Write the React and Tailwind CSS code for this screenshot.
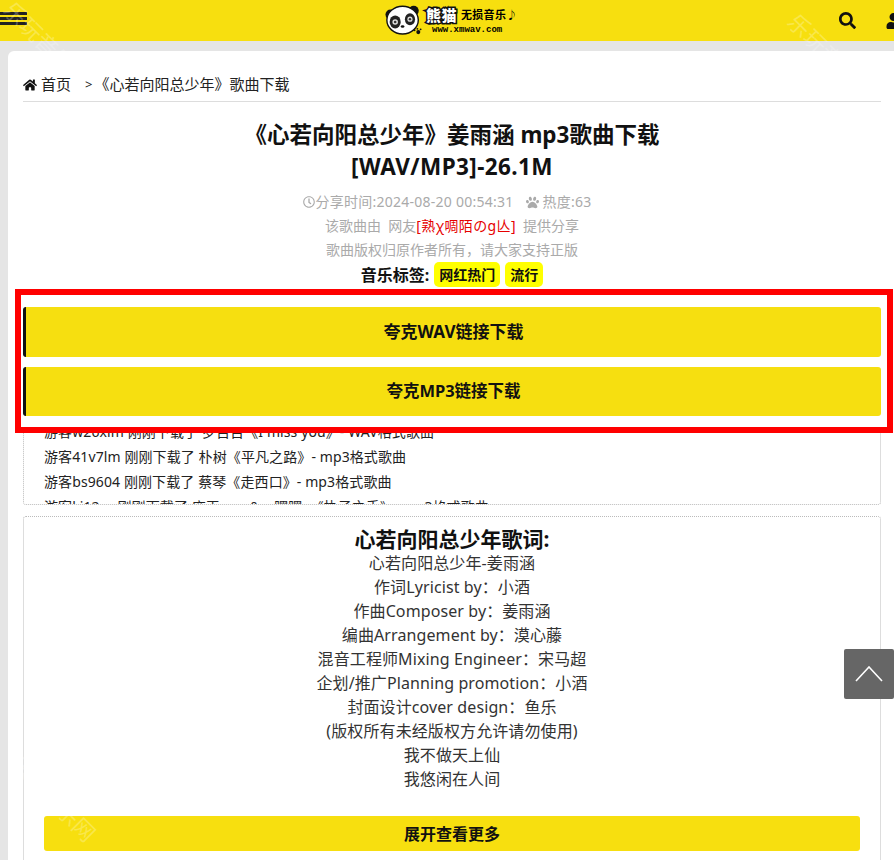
import React from 'react';
import { FaHome, FaPaw, FaRegClock, FaSearch, FaUser } from 'react-icons/fa';

const lyrics = [
  '心若向阳总少年-姜雨涵',
  '作词Lyricist by：小酒',
  '作曲Composer by：姜雨涵',
  '编曲Arrangement by：漠心藤',
  '混音工程师Mixing Engineer：宋马超',
  '企划/推广Planning promotion：小酒',
  '封面设计cover design：鱼乐',
  '(版权所有未经版权方允许请勿使用)',
  '我不做天上仙',
  '我悠闲在人间',
];

const downloads = [
  '游客41v7lm 刚刚下载了 朴树《平凡之路》- mp3格式歌曲',
  '游客bs9604 刚刚下载了 蔡琴《走西口》- mp3格式歌曲',
];

function PandaLogo() {
  return (
    <svg width="37" height="34" viewBox="0 0 40 36" className="shrink-0">
      <circle cx="6" cy="11" r="5.5" fill="#111" />
      <circle cx="31" cy="7" r="5.5" fill="#111" />
      <ellipse cx="19" cy="17" rx="17" ry="15" fill="#fff" stroke="#111" strokeWidth="1.5" />
      <ellipse cx="11" cy="19" rx="6" ry="7" fill="#222" />
      <ellipse cx="27" cy="16" rx="5.5" ry="6.5" fill="#222" />
      <circle cx="11" cy="19" r="3" fill="#ddd" />
      <circle cx="27" cy="16" r="2.8" fill="#ddd" />
      <circle cx="11" cy="19" r="1.4" fill="#333" />
      <circle cx="27" cy="16" r="1.3" fill="#333" />
      <ellipse cx="19" cy="24" rx="2" ry="1.3" fill="#111" />
      <circle cx="36" cy="30" r="2.2" fill="#111" />
      <circle cx="32" cy="28" r="1" fill="#111" />
      <circle cx="35" cy="26.5" r="1" fill="#111" />
      <circle cx="38.5" cy="27" r="1" fill="#111" />
    </svg>
  );
}

function Logo() {
  return (
    <div className="flex items-center text-black">
      <PandaLogo />
      <div className="flex flex-col ml-[4px] -mt-[2px]">
        <div className="flex items-center h-[20px] leading-[20px] whitespace-nowrap">
          <span className="text-[15px] font-black tracking-[0.5px] text-white [-webkit-text-stroke:3px_#111] [paint-order:stroke_fill]">熊猫</span>
          <span className="text-[11px] font-bold ml-[4px] tracking-[0.3px]">无损音乐</span>
          <span className="text-[11px] leading-none">♪</span>
        </div>
        <div className="text-[9px] leading-[10px] font-bold ml-[6px] whitespace-nowrap [font-family:'Liberation_Mono',monospace]">www.xmwav.com</div>
      </div>
    </div>
  );
}

function Watermark({ className }) {
  return (
    <span className={`absolute z-20 pointer-events-none whitespace-nowrap rotate-45 text-[22px] text-white/25 ${className}`}>
      乐玩音乐网
    </span>
  );
}

export default function App() {
  return (
    <div className="relative w-[894px] h-[860px] overflow-hidden bg-[#e5e5e5] text-[#222] [font-family:'Noto_Sans','Noto_Sans_CJK_SC',sans-serif]">
      <header className="flex items-center h-[41px] bg-[#f7df0f] overflow-hidden">
        <div className="flex flex-col gap-[2px] w-[27px] shrink-0 -mt-[5px]">
          <i className="block h-[3px] bg-[#222]" />
          <i className="block h-[3px] bg-[#222]" />
          <i className="block h-[3px] bg-[#222]" />
        </div>
        <div className="ml-[358px] shrink-0"><Logo /></div>
        <FaSearch className="ml-auto w-[17px] h-[17px] text-[#111] shrink-0" />
        <FaUser className="ml-[30px] -mr-[7px] w-[15px] h-[16px] text-[#111] shrink-0" />
      </header>

      <main className="mt-[10px] ml-2 bg-white rounded-tl-[6px] pl-[15px] pr-[13px] pt-[18px] h-[809px]">
        <nav className="flex items-center h-[33px] border-b border-[#ddd] text-[15px] text-[#222]">
          <FaHome className="w-[14px] h-[14px] text-[#111]" />
          <span className="ml-[4px] -mt-px">首页</span>
          <span className="ml-[14px] text-[13px] -mt-px">&gt;</span>
          <span className="ml-[2px] -mt-px">《心若向阳总少年》歌曲下载</span>
        </nav>

        <h1 className="mt-[17px] text-center text-[22.5px] leading-[32px] font-bold text-[#111]">
          《心若向阳总少年》姜雨涵 mp3歌曲下载<br /><span className="tracking-[0.4px]">[WAV/MP3]-26.1M</span>
        </h1>

        <div className="mt-[7px] text-center text-[14px] leading-[24px] text-[#aaa]">
          <div className="flex items-center justify-center pr-[9px]">
            <FaRegClock className="w-[12px] h-[12px]" />
            <span className="tracking-[0.25px]">分享时间:2024-08-20 00:54:31</span>
            <FaPaw className="ml-[12px] mr-[4px] w-[13px] h-[13px]" />
            <span className="tracking-[0.25px]">热度:63</span>
          </div>
          <div className="flex justify-center">
            <span className="whitespace-pre">该歌曲由  网友</span>
            <span className="text-[#e60000] tracking-[0.4px]">[熟χ啁陌のg亾]</span>
            <span className="ml-[7px]">提供分享</span>
          </div>
          <div>歌曲版权归原作者所有，请大家支持正版</div>
        </div>

        <div className="flex items-center justify-center h-[25px] text-[#111]">
          <b className="text-[16px]">音乐标签:</b>
          <span className="ml-[5px] px-[5px] h-[25px] leading-[25px] rounded-[5px] bg-[#ffff00] text-[14px] font-bold">网红热门</span>
          <span className="ml-[5px] px-[5px] h-[25px] leading-[25px] rounded-[5px] bg-[#ffff00] text-[14px] font-bold">流行</span>
        </div>

        <section className="relative z-10 mt-[2px] -ml-2 -mr-[12px] h-[144px] border-[6px] border-[#ff0000] bg-white pl-[2px] pr-[6px] pt-[12px] flex flex-col gap-[10px]">
          <a className="flex items-center justify-center h-[50px] bg-[#f6df10] border-l-[3px] border-[#111] rounded-[3px] text-[17px] font-bold text-[#111]">夸克WAV链接下载</a>
          <a className="flex items-center justify-center h-[49px] bg-[#f6df10] border-l-[3px] border-[#111] rounded-[3px] text-[16.5px] font-bold text-[#111]">夸克MP3链接下载</a>
        </section>

        <section className="-mt-[18px] h-[90px] overflow-hidden rounded-[3px] border border-dotted border-[#bbb] pl-[20px] pt-[3px] text-[14px] leading-[25px] tracking-[0.1px] text-[#222]">
          <div>游客w26xlm 刚刚下载了 罗百吉《I miss you》- WAV格式歌曲</div>
          {downloads.map((row) => <div key={row}>{row}</div>)}
          <div>游客kj12cv 刚刚下载了 庞玉gem&amp;。嘿嘿。《执子之手》- mp3格式歌曲</div>
        </section>

        <section className="mt-[11px] rounded-t-[3px] border border-dotted border-[#bbb] px-[20px] pt-[8px] pb-[20px] text-center">
          <h2 className="text-[21px] leading-[28px] font-bold text-[#111]">心若向阳总少年歌词:</h2>
          <div className="text-[16px] leading-[24px] tracking-[0.1px] text-[#333] -mt-[2px]">
            {lyrics.map((line) => <p key={line}>{line}</p>)}
          </div>
          <button className="block w-full mt-[25px] h-[35px] bg-[#f7df0f] rounded-[3px] text-[16px] font-bold text-[#111]">展开查看更多</button>
        </section>
      </main>

      <a className="absolute z-30 left-[844px] top-[649px] flex items-center justify-center w-[50px] h-[50px] rounded-[2px] bg-[#666]">
        <svg width="28" height="16" viewBox="0 0 28 16" fill="none" stroke="#fff" strokeWidth="1.6">
          <polyline points="1,15 14,1 27,15" />
        </svg>
      </a>

      <Watermark className="left-[-8px] top-[28px]" />
      <Watermark className="left-[776px] top-[40px]" />
      <Watermark className="left-[-2px] top-[782px]" />
    </div>
  );
}
